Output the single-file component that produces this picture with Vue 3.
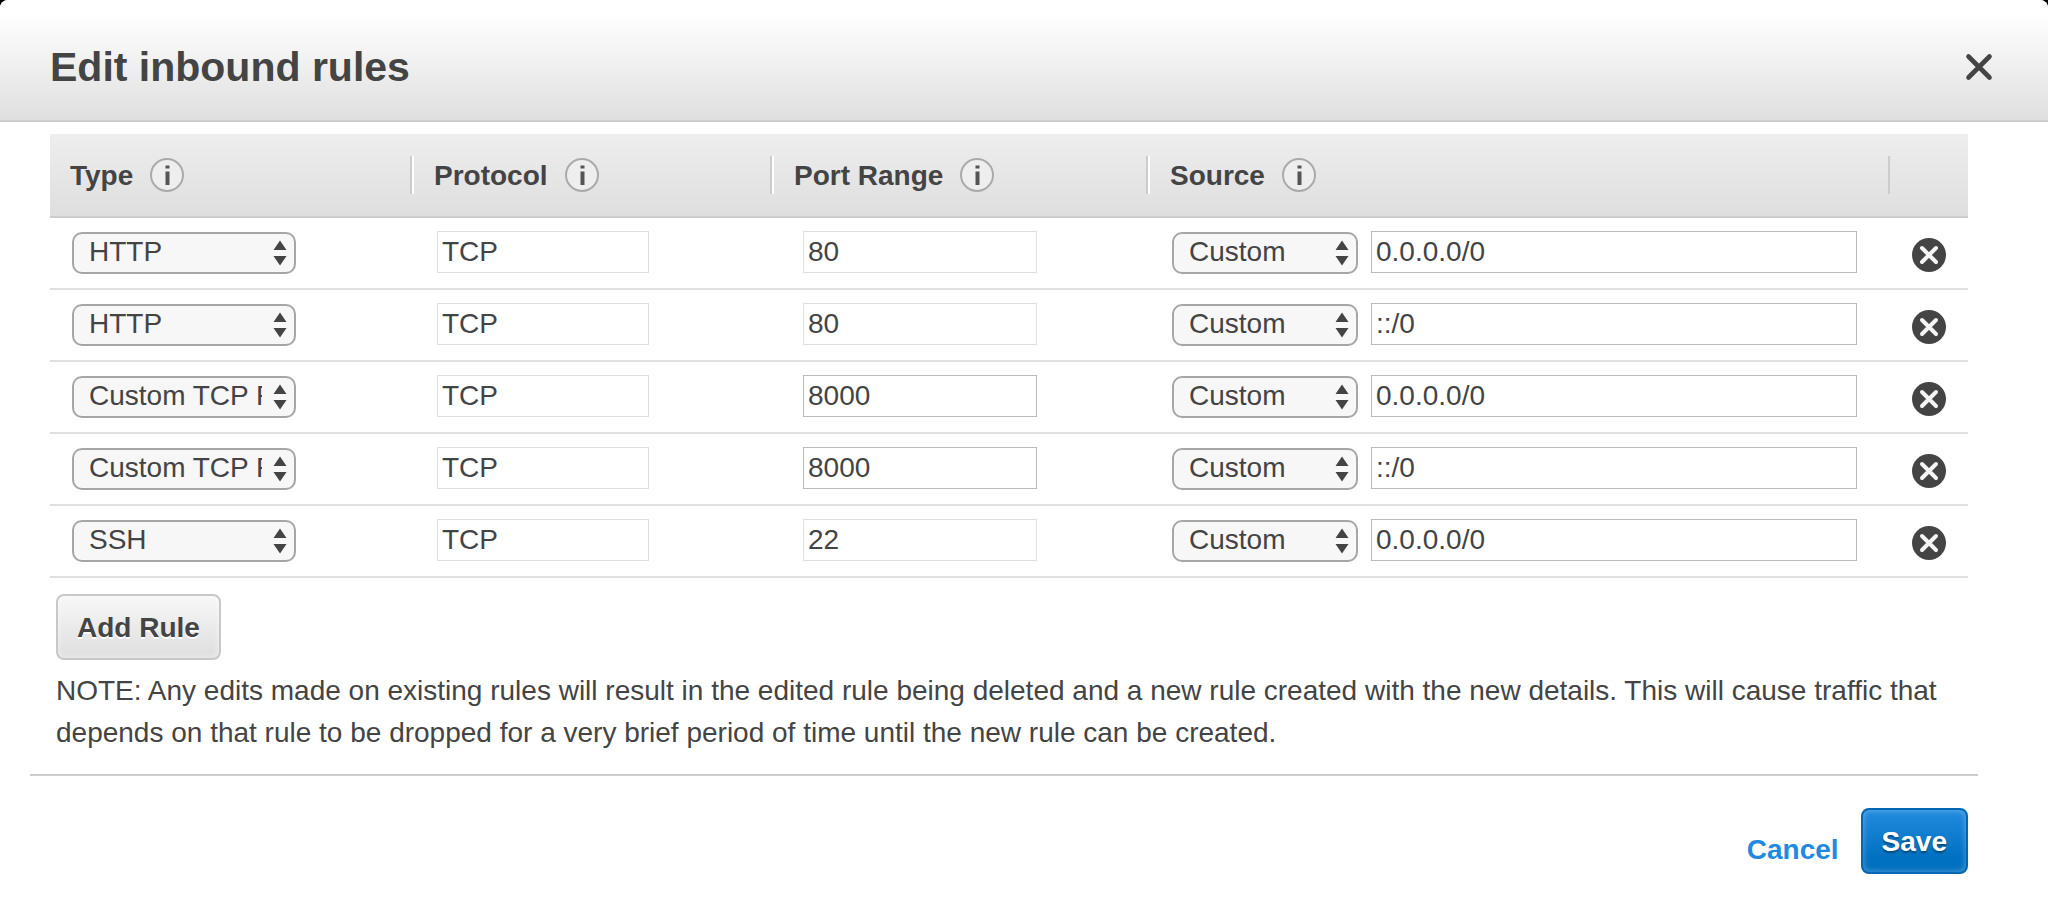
<script setup>
import { reactive } from 'vue'

const columns = [
  { label: 'Type', cls: 'col-type' },
  { label: 'Protocol', cls: 'col-protocol' },
  { label: 'Port Range', cls: 'col-port' },
  { label: 'Source', cls: 'col-source' },
]
const types = ['HTTP', 'Custom TCP Rule', 'SSH']
const sources = ['Custom', 'Anywhere', 'My IP']

const rules = reactive([
  { id: 1, type: 'HTTP', port: '80', source: 'Custom', cidr: '0.0.0.0/0' },
  { id: 2, type: 'HTTP', port: '80', source: 'Custom', cidr: '::/0' },
  { id: 3, type: 'Custom TCP Rule', port: '8000', source: 'Custom', cidr: '0.0.0.0/0' },
  { id: 4, type: 'Custom TCP Rule', port: '8000', source: 'Custom', cidr: '::/0' },
  { id: 5, type: 'SSH', port: '22', source: 'Custom', cidr: '0.0.0.0/0' },
])
let nextId = 6

function addRule() {
  rules.push({ id: nextId++, type: 'Custom TCP Rule', port: '', source: 'Custom', cidr: '' })
}
function removeRule(i) {
  rules.splice(i, 1)
}
</script>

<template>
  <div class="dialog" role="dialog" aria-labelledby="dialog-title">
    <header class="dialog-header">
      <h1 id="dialog-title">Edit inbound rules</h1>
      <button class="icon-button" type="button" aria-label="Close">
        <svg width="28" height="28" viewBox="0 0 28 28">
          <path d="M3.500 3.500L24.500 24.500M24.500 3.500L3.500 24.500" stroke="#444" stroke-width="4.600" stroke-linecap="round" />
        </svg>
      </button>
    </header>

    <main class="dialog-body">
      <table>
        <colgroup>
          <col v-for="c in columns" :key="c.label" :class="c.cls" />
          <col class="col-delete" />
        </colgroup>
        <thead>
          <tr>
            <th v-for="c in columns" :key="c.label" scope="col">
              <div class="head-cell">
                <span>{{ c.label }}</span>
                <svg width="36" height="36" viewBox="0 0 36 36" aria-hidden="true">
                  <circle cx="18" cy="18" r="16" fill="#eee" stroke="#aaa" stroke-width="2" />
                  <path d="M16.500 8.500h4v3h-4zM16.500 14.500h4v13.500h-4z" fill="#555" />
                </svg>
              </div>
            </th>
            <th aria-label="Remove"></th>
          </tr>
        </thead>
        <tbody>
          <tr v-for="(rule, i) in rules" :key="rule.id">
            <td>
              <div class="select type-select">
                <select v-model="rule.type" aria-label="Type">
                  <option v-for="t in types" :key="t">{{ t }}</option>
                </select>
                <svg width="14" height="26" viewBox="0 0 14 26" aria-hidden="true">
                  <path d="M0.500 10L7 0.500L13.500 10zM0.500 16L7 25.500L13.500 16z" fill="#444" />
                </svg>
              </div>
            </td>
            <td>
              <input class="protocol" type="text" value="TCP" aria-label="Protocol" disabled />
            </td>
            <td>
              <input
                v-model="rule.port"
                class="port"
                type="text"
                aria-label="Port range"
                :disabled="rule.type !== 'Custom TCP Rule'"
              />
            </td>
            <td>
              <div class="source">
                <div class="select source-select">
                  <select v-model="rule.source" aria-label="Source">
                    <option v-for="s in sources" :key="s">{{ s }}</option>
                  </select>
                  <svg width="14" height="26" viewBox="0 0 14 26" aria-hidden="true">
                    <path d="M0.500 10L7 0.500L13.500 10zM0.500 16L7 25.500L13.500 16z" fill="#444" />
                  </svg>
                </div>
                <input v-model="rule.cidr" class="cidr" type="text" aria-label="Source address" />
              </div>
            </td>
            <td>
              <button class="icon-button delete" type="button" aria-label="Remove rule" @click="removeRule(i)">
                <svg width="34" height="34" viewBox="0 0 34 34">
                  <circle cx="17" cy="17" r="17" fill="#444" />
                  <path d="M10 10L24 24M24 10L10 24" stroke="#f4f4f4" stroke-width="4" stroke-linecap="round" />
                </svg>
              </button>
            </td>
          </tr>
        </tbody>
      </table>

      <div class="below">
        <button class="button" type="button" @click="addRule">Add Rule</button>
        <p>
          NOTE: Any edits made on existing rules will result in the edited rule being deleted and a new rule
          created with the new details. This will cause traffic that depends on that rule to be dropped for a
          very brief period of time until the new rule can be created.
        </p>
      </div>
    </main>

    <footer class="dialog-footer">
      <a href="#">Cancel</a>
      <button class="button primary" type="button">Save</button>
    </footer>
  </div>
</template>

<style>
body {
  margin: 0;
  background: #000;
}
</style>

<style scoped>
.dialog,
.dialog * {
  box-sizing: border-box;
}
.dialog {
  min-height: 100vh;
  overflow: hidden;
  border-radius: 8px 8px 0 0;
  background: #fff;
  color: #444;
  font-family: "Liberation Sans", Arial, sans-serif;
  font-size: 28px;
  line-height: 42px;
}
select,
input,
button {
  margin: 0;
  font: inherit;
  color: #444;
}
.dialog-header {
  display: flex;
  align-items: center;
  justify-content: space-between;
  height: 122px;
  padding: 13px 55px 0 50px;
  border-bottom: 2px solid #ccc;
  background: linear-gradient(#fff 12%, #dfdfdf);
}
h1 {
  margin: 0;
  font-size: 41px;
  line-height: 48px;
}
.icon-button {
  display: block;
  padding: 0;
  border: 0;
  background: none;
  cursor: pointer;
}
.icon-button svg {
  display: block;
}
.dialog-body {
  padding: 12px 80px 0 50px;
}
table {
  width: 100%;
  table-layout: fixed;
  border-collapse: separate;
  border-spacing: 0;
}
.col-type {
  width: 362px;
}
.col-protocol {
  width: 360px;
}
.col-port {
  width: 376px;
}
.col-delete {
  width: 78px;
}
thead {
  background: linear-gradient(#eee, #dedede);
}
th {
  height: 84px;
  padding: 0;
  border-bottom: 2px solid #ccc;
  text-align: left;
}
.head-cell {
  display: flex;
  align-items: center;
  gap: 16px;
  height: 38px;
  padding-left: 20px;
  border-left: 2px solid #fff;
  border-right: 2px solid #ccc;
}
.head-cell span {
  padding-top: 2px;
}
th:first-child .head-cell {
  padding-left: 18px;
  border-left-color: transparent;
}
td {
  height: 72px;
  padding: 13px 0 0 24px;
  border-bottom: 2px solid #dfdfdf;
  vertical-align: top;
}
td:first-child {
  padding-left: 22px;
}
td:nth-child(2) {
  padding-left: 25px;
}
td:nth-child(3) {
  padding-left: 31px;
}
td:last-child {
  padding-left: 22px;
}
.select {
  position: relative;
  height: 42px;
  margin-top: 1px;
}
.type-select {
  width: 224px;
}
.source-select {
  flex: none;
  width: 186px;
}
select {
  display: block;
  width: 100%;
  height: 42px;
  padding: 0 32px 2px 15px;
  border: 2px solid #a6a6a6;
  border-radius: 10px;
  background: #f7f7f7;
  line-height: 36px;
  appearance: none;
}
.select svg {
  position: absolute;
  top: 8px;
  right: 9px;
  pointer-events: none;
}
input {
  display: block;
  height: 42px;
  padding: 0 4px;
  border: 1px solid #bbb;
  border-radius: 0;
  background: #fff;
}
input:disabled {
  border-color: #dfdfdf;
}
.protocol {
  width: 212px;
}
.port {
  width: 234px;
}
.source {
  display: flex;
  align-items: flex-start;
  gap: 13px;
  padding-right: 33px;
}
.cidr {
  flex: 1;
  min-width: 0;
}
.delete {
  margin-top: 7px;
}
.below {
  padding: 16px 0 0 6px;
}
.button {
  display: block;
  height: 66px;
  padding: 2px 19px 0;
  border: 2px solid #c8c8c8;
  border-radius: 8px;
  background: linear-gradient(#f7f7f7, #dedede);
  box-shadow: inset 0 0 6px rgba(255, 255, 255, 0.6);
  font-weight: bold;
  text-shadow: 0 2px 0 #fff;
  cursor: pointer;
}
p {
  margin: 10px 0 20px;
}
.dialog-footer {
  display: flex;
  align-items: center;
  justify-content: flex-end;
  gap: 22px;
  margin: 0 70px 0 30px;
  padding: 32px 10px 38px 0;
  border-top: 2px solid #ccc;
}
.dialog-footer a {
  padding-top: 18px;
  color: #228ade;
  font-weight: bold;
  text-decoration: none;
}
.primary {
  border-color: #0067b5;
  background: linear-gradient(#228ade, #0070c0 80%);
  box-shadow: inset 0 0 6px rgba(255, 255, 255, 0.35);
  color: #fff;
  text-shadow: 0 2px 2px rgba(0, 0, 0, 0.4);
}
</style>
